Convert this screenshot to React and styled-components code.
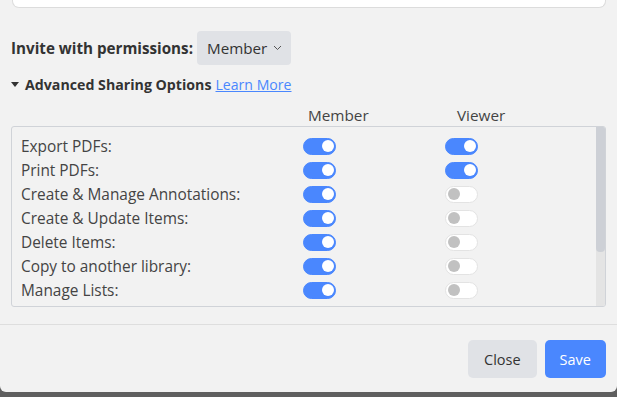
import React from 'react';
import styled, { createGlobalStyle } from 'styled-components';

const GlobalStyle = createGlobalStyle`
  body {
    margin: 0;
    background: #5f5f5f;
    font-family: 'Open Sans', 'Noto Sans', sans-serif;
  }
`;

const permissions = [
  { label: 'Export PDFs:', member: true, viewer: true },
  { label: 'Print PDFs:', member: true, viewer: true },
  { label: 'Create & Manage Annotations:', member: true, viewer: false },
  { label: 'Create & Update Items:', member: true, viewer: false },
  { label: 'Delete Items:', member: true, viewer: false },
  { label: 'Copy to another library:', member: true, viewer: false },
  { label: 'Manage Lists:', member: true, viewer: false },
];

export default function App() {
  return (
    <>
      <GlobalStyle />
      <Modal>
        <Content>
          <EmailBox />
          <InviteRow>
            <InviteLabel>Invite with permissions:</InviteLabel>
            <RoleSelect>
              Member
              <svg width="9" height="6" viewBox="0 0 9 6" fill="none">
                <path d="M1 1l3.5 3.5L8 1" stroke="#555" strokeWidth="1" />
              </svg>
            </RoleSelect>
          </InviteRow>
          <AdvancedRow>
            <Caret />
            <AdvancedTitle>Advanced Sharing Options</AdvancedTitle>
            <LearnMore href="#">Learn More</LearnMore>
          </AdvancedRow>
          <HeaderGrid>
            <span />
            <ColumnHeading $offset={15}>Member</ColumnHeading>
            <ColumnHeading $offset={22}>Viewer</ColumnHeading>
          </HeaderGrid>
          <PermissionBox>
            <PermissionList>
              {permissions.map((p) => (
                <PermissionRow key={p.label}>
                  <PermissionLabel>{p.label}</PermissionLabel>
                  <Toggle $on={p.member} />
                  <Toggle $on={p.viewer} />
                </PermissionRow>
              ))}
            </PermissionList>
            <ScrollTrack>
              <ScrollThumb style={{ height: '70%' }} />
            </ScrollTrack>
          </PermissionBox>
        </Content>
        <Footer>
          <Button>Close</Button>
          <Button $primary>Save</Button>
        </Footer>
      </Modal>
    </>
  );
}

const Modal = styled.div`
  width: 617px;
  height: 392px;
  background: #f2f2f2;
  border-radius: 0 0 6px 6px;
  display: flex;
  flex-direction: column;
  color: #333;
`;

const Content = styled.div`
  flex: 1;
  padding: 0 11px;
  display: flex;
  flex-direction: column;
`;

const EmailBox = styled.div`
  height: 7px;
  margin: 0 0 0 1px;
  background: #fff;
  border: 1px solid #dcdcdc;
  border-top: none;
  border-radius: 0 0 7px 7px;
`;

const InviteRow = styled.div`
  display: flex;
  align-items: center;
  gap: 4px;
  margin-top: 23px;
`;

const InviteLabel = styled.span`
  font-size: 15.2px;
  font-weight: 700;
  color: #333;
`;

const RoleSelect = styled.div`
  height: 34px;
  box-sizing: border-box;
  padding: 0 9px 0 10px;
  display: flex;
  align-items: center;
  gap: 6px;
  background: #e0e2e6;
  border-radius: 4px;
  font-size: 15.2px;
  color: #333;
`;

const AdvancedRow = styled.div`
  display: flex;
  align-items: center;
  margin-top: 9px;
  height: 20px;
`;

const Caret = styled.span`
  width: 0;
  height: 0;
  border-left: 4px solid transparent;
  border-right: 4px solid transparent;
  border-top: 5px solid #333;
  margin: 1px 6px 0 0;
`;

const AdvancedTitle = styled.span`
  font-size: 14.2px;
  font-weight: 700;
  color: #333;
`;

const LearnMore = styled.a`
  margin-left: 4px;
  font-size: 14.1px;
  color: #4a87fe;
  text-decoration: underline;
`;

const HeaderGrid = styled.div`
  display: grid;
  grid-template-columns: 282px 142px 1fr;
  margin-top: 10px;
  height: 22px;
  align-items: center;
`;

const ColumnHeading = styled.span`
  padding-left: ${(p) => p.$offset}px;
  font-size: 15.3px;
  color: #444;
`;

const PermissionBox = styled.div`
  height: 181px;
  box-sizing: border-box;
  border: 1px solid #d0d3d8;
  border-radius: 3px;
  overflow: hidden;
  display: flex;
`;

const PermissionList = styled.div`
  flex: 1;
  padding: 7px 0 4px 9px;
`;

const ScrollTrack = styled.div`
  width: 9px;
  background: #e4e4e4;
  display: flex;
  flex-direction: column;
`;

const ScrollThumb = styled.div`
  background: #cdd0d6;
  border-radius: 0 0 4px 4px;
`;

const PermissionRow = styled.div`
  display: grid;
  grid-template-columns: 282px 142px 1fr;
  align-items: center;
  height: 24px;
`;

const PermissionLabel = styled.span`
  font-size: 15.4px;
  color: #444;
`;

const Toggle = styled.span`
  position: relative;
  width: 33px;
  height: 17px;
  box-sizing: border-box;
  border-radius: 9px;
  background: ${(p) => (p.$on ? '#4a87fe' : '#fff')};
  border: 1px solid ${(p) => (p.$on ? '#4a87fe' : '#e3e3e3')};

  &::after {
    content: '';
    position: absolute;
    top: 1.5px;
    left: ${(p) => (p.$on ? '18px' : '2px')};
    width: 12px;
    height: 12px;
    border-radius: 50%;
    background: ${(p) => (p.$on ? '#fff' : '#c1c1c1')};
  }
`;

const Footer = styled.div`
  border-top: 1px solid #dedede;
  height: 68px;
  box-sizing: border-box;
  padding: 15px 11px 0 0;
  display: flex;
  justify-content: flex-end;
  align-items: flex-start;
  gap: 8px;
`;

const Button = styled.button`
  height: 38px;
  padding: 0 ${(p) => (p.$primary ? '15px' : '16px')};
  border: none;
  border-radius: 5px;
  font-family: 'Open Sans', 'Noto Sans', sans-serif;
  font-size: 14.5px;
  background: ${(p) => (p.$primary ? '#4a87fe' : '#e0e2e6')};
  color: ${(p) => (p.$primary ? '#fff' : '#333')};
`;
